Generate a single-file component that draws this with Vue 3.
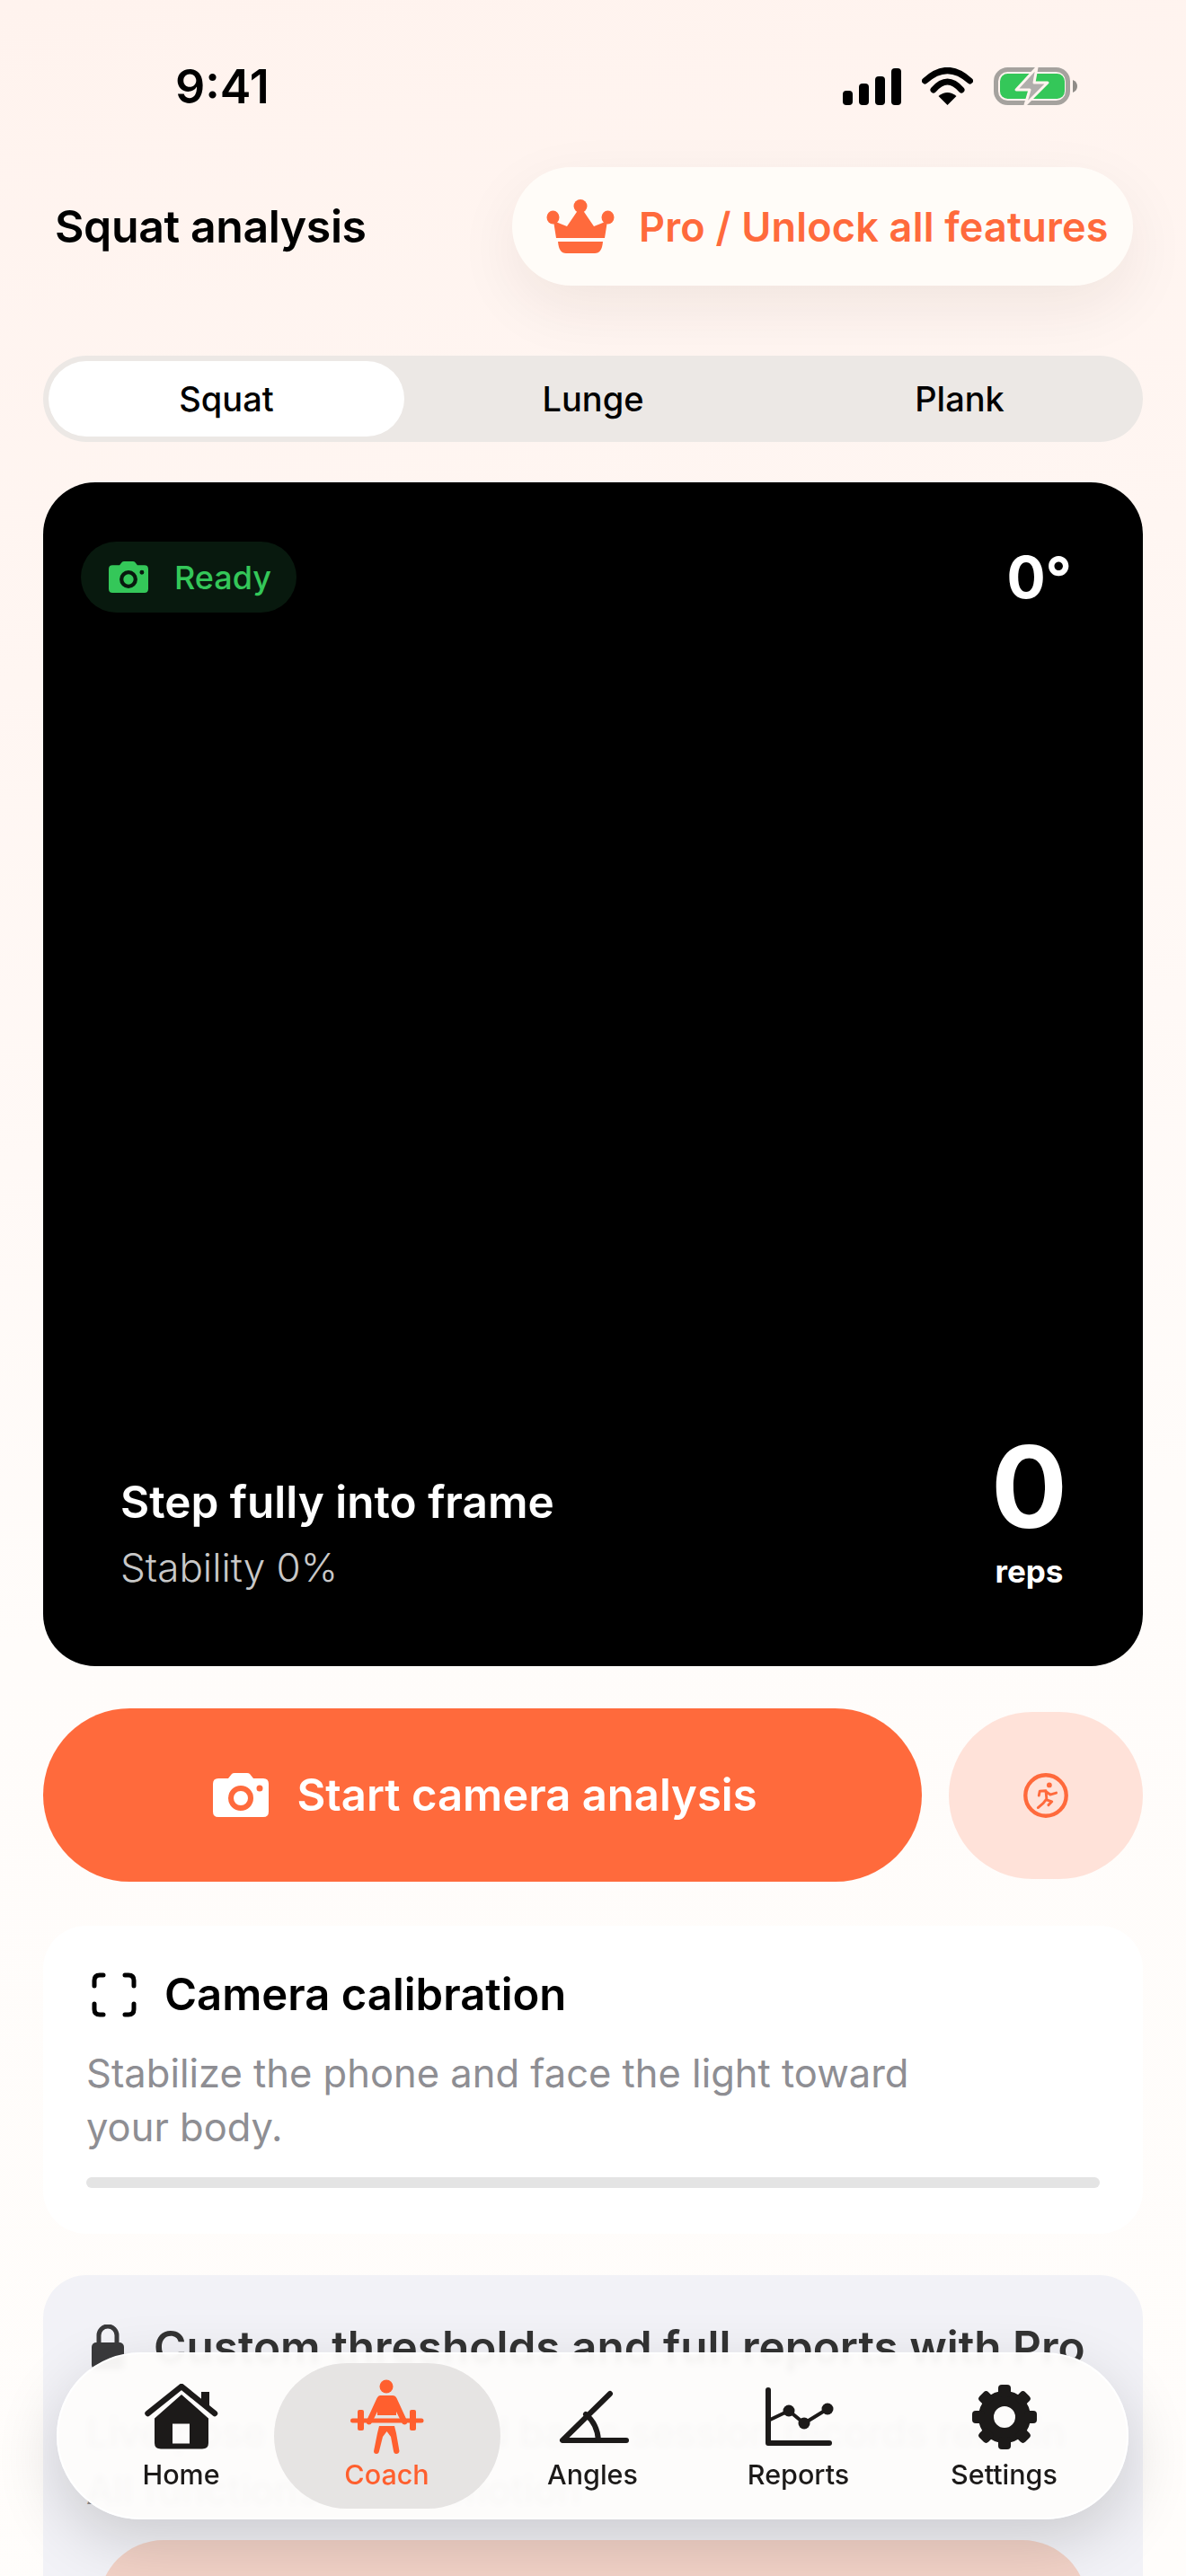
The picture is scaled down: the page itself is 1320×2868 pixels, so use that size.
<script setup>
const tabs = ['Squat', 'Lunge', 'Plank']
const bars = [16, 24, 32, 41]
const gearTeeth = [0, 45, 90, 135, 180, 225, 270, 315]
</script>

<template>
  <div class="page">
    <div class="status">
      <span class="time">9:41</span>
      <div class="status-icons">
        <div class="signal">
          <i v-for="h in bars" :key="h" :style="{ height: h + 'px' }"></i>
        </div>
        <svg width="57" height="42" viewBox="0 0 57 42">
          <path d="M3.5 15Q28.5 -8 53.5 15" fill="none" stroke="#000" stroke-width="7" stroke-linecap="round" />
          <path d="M13 25Q28.5 7 44 25" fill="none" stroke="#000" stroke-width="7" stroke-linecap="round" />
          <path d="M28.5 42L18.5 32Q28.5 24 38.5 32Z" fill="#000" />
        </svg>
        <svg width="94" height="46" viewBox="0 0 94 46">
          <rect x="2.5" y="4.5" width="80" height="37" rx="13" fill="none" stroke="#a5a29e" stroke-width="5" />
          <rect x="7" y="9" width="72" height="28" rx="8.5" fill="#34c759" />
          <path d="M88 16Q93 18 93 23Q93 28 88 30Z" fill="#8f8c88" />
          <path d="M48 2L25 27H40L35 44L60 19H45Z" fill="#b0aeac" stroke="#fff4ef" stroke-width="3" stroke-linejoin="round" />
        </svg>
      </div>
    </div>

    <header class="top">
      <h1>Squat analysis</h1>
      <button class="pro-btn">
        <svg width="76" height="60" viewBox="0 0 76 60">
          <ellipse cx="38" cy="7.5" rx="7.5" ry="7.5" />
          <ellipse cx="7.5" cy="20" rx="7" ry="7.5" />
          <ellipse cx="68.5" cy="20" rx="7" ry="7.5" />
          <path d="M11 43L8 24L23 30L38 8L53 30L68 24L65 43Z" />
          <path d="M13 47H63Q62 60 54 60H22Q14 60 13 47Z" />
        </svg>
        <span>Pro / Unlock all features</span>
      </button>
    </header>

    <div class="tabs">
      <div v-for="(t, i) in tabs" :key="t" class="tab" :class="{ active: i === 0 }">{{ t }}</div>
    </div>

    <section class="camera">
      <div class="cam-top">
        <div class="ready">
          <svg width="44" height="35" viewBox="0 0 62 49">
            <path fill="#34c759" fill-rule="evenodd" d="M6 6H17L21 1Q22 0 24 0H38Q40 0 41 1L45 6H56Q62 6 62 12V43Q62 49 56 49H6Q0 49 0 43V12Q0 6 6 6ZM31 14A14 14 0 1 0 31 42A14 14 0 1 0 31 14ZM31 20A8 8 0 1 1 31 36A8 8 0 1 1 31 20ZM52 13.5A3.5 3.5 0 1 0 52 20.500A3.5 3.5 0 1 0 52 13.5Z" />
          </svg>
          <span>Ready</span>
        </div>
        <div class="angle">0°</div>
      </div>
      <div class="cam-bottom">
        <div>
          <div class="hint">Step fully into frame</div>
          <div class="stability">Stability 0%</div>
        </div>
        <div class="reps">
          <div class="reps-num">0</div>
          <div class="reps-label">reps</div>
        </div>
      </div>
    </section>

    <div class="actions">
      <button class="start">
        <svg width="62" height="49" viewBox="0 0 62 49">
          <path fill="#fff" fill-rule="evenodd" d="M6 6H17L21 1Q22 0 24 0H38Q40 0 41 1L45 6H56Q62 6 62 12V43Q62 49 56 49H6Q0 49 0 43V12Q0 6 6 6ZM31 14A14 14 0 1 0 31 42A14 14 0 1 0 31 14ZM31 20A8 8 0 1 1 31 36A8 8 0 1 1 31 20ZM52 13.5A3.5 3.5 0 1 0 52 20.500A3.5 3.5 0 1 0 52 13.5Z" />
        </svg>
        <span>Start camera analysis</span>
      </button>
      <button class="run">
        <svg width="58" height="58" viewBox="0 0 60 60">
          <circle cx="30" cy="30" r="23.500" fill="none" stroke="#ff6a3c" stroke-width="4.500" />
          <circle cx="34" cy="18" r="3" fill="#ff6a3c" />
          <path d="M22 30L23 25L30 24.500L31 35L37 37L33 41M30 35L27 39L21 44M31 26L35 29L42 27" fill="none" stroke="#ff6a3c" stroke-width="3" stroke-linecap="round" stroke-linejoin="round" />
        </svg>
      </button>
    </div>

    <section class="calib">
      <div class="calib-head">
        <svg width="50" height="50" viewBox="0 0 50 50" fill="none" stroke="#000" stroke-width="5" stroke-linecap="round">
          <path d="M3 15V9Q3 3 9 3H13M37 3H41Q47 3 47 9V15M47 35V41Q47 47 41 47H37M13 47H9Q3 47 3 41V35" />
        </svg>
        <h2>Camera calibration</h2>
      </div>
      <p>Stabilize the phone and face the light toward your body.</p>
      <div class="track"></div>
    </section>

    <section class="pro-card">
      <div class="pro-head">
        <svg width="36" height="50" viewBox="0 0 36 50">
          <path d="M8 22V12A10 10 0 0 1 28 12V22" fill="none" stroke="#3a3a3c" stroke-width="5" />
          <rect y="20" width="36" height="30" rx="5" fill="#3a3a3c" />
        </svg>
        <h2>Custom thresholds and full reports with Pro</h2>
      </div>
      <p>Live pose analysis and basic session records remain<br />All functions at 100 motion</p>
      <div class="pro-cta"></div>
    </section>

    <nav class="nav">
      <div class="nav-item">
        <svg width="82" height="74" viewBox="0 0 82 74">
          <path d="M11 38.500L41 12L71 38.500V66Q71 72.500 64 72.500H18Q11 72.500 11 66ZM31 44.500V66.500H50V44.500Z" fill="#1c1a19" fill-rule="evenodd" />
          <path d="M3.500 33L41 3L78 33" fill="none" stroke="#1c1a19" stroke-width="6.500" stroke-linecap="round" stroke-linejoin="round" />
          <path d="M63 9H72V25L63 18Z" fill="#1c1a19" />
        </svg>
        <span>Home</span>
      </div>
      <div class="nav-item on">
        <svg width="82" height="84" viewBox="0 0 82 84">
          <circle cx="40" cy="8" r="7.500" fill="#ff5f2e" />
          <path d="M33 18H47Q50 18 51.500 21L63 46Q64 50 60.500 50.500Q58 50.500 57 48L51 36V40H30V36L24 48Q23 50.500 20.500 50.500Q17 50 18 46L29.500 21Q31 18 33 18Z" fill="#ff5f2e" />
          <path d="M2.500 46H79" stroke="#ff5f2e" stroke-width="5" stroke-linecap="round" />
          <rect x="8" y="34" width="7" height="23" rx="2" fill="#ff5f2e" />
          <rect x="66" y="34" width="7" height="23" rx="2" fill="#ff5f2e" />
          <path d="M32 52H49L51 60L54.500 80Q54 83 51 83Q48.500 83 48 80L45 64L40.500 58L36 64L32 80Q31.500 83 29 83Q26 83 26 80L30 60Z" fill="#ff5f2e" />
        </svg>
        <span>Coach</span>
      </div>
      <div class="nav-item">
        <svg width="82" height="60" viewBox="0 0 82 60" fill="none" stroke="#1c1a19" stroke-width="6" stroke-linecap="round" stroke-linejoin="round">
          <path d="M60 4L7 56H78" />
          <path d="M33 27Q46 38 47 56" />
        </svg>
        <span>Angles</span>
      </div>
      <div class="nav-item">
        <svg width="80" height="66" viewBox="0 0 80 66">
          <path d="M6 3V62H74" fill="none" stroke="#1c1a19" stroke-width="6" stroke-linecap="round" stroke-linejoin="round" />
          <path d="M6 37L29 26L46 40L72 24" fill="none" stroke="#1c1a19" stroke-width="4" />
          <circle cx="29" cy="26" r="6.500" fill="#1c1a19" />
          <circle cx="46" cy="40" r="6.500" fill="#1c1a19" />
          <circle cx="72" cy="24" r="6.500" fill="#1c1a19" />
        </svg>
        <span>Reports</span>
      </div>
      <div class="nav-item">
        <svg width="74" height="74" viewBox="-37 -37 74 74">
          <circle r="20.500" fill="none" stroke="#1c1a19" stroke-width="17" />
          <rect v-for="a in gearTeeth" :key="a" x="-7" y="-36" width="14" height="14" rx="4" fill="#1c1a19" :transform="`rotate(${a})`" />
        </svg>
        <span>Settings</span>
      </div>
      <div class="nav-pill"></div>
    </nav>
  </div>
</template>

<style>
html, body {
  margin: 0;
  background: #fffcfa;
}
</style>

<style scoped>
.page {
  position: relative;
  width: 1320px;
  height: 2868px;
  overflow: hidden;
  padding: 0 48px;
  box-sizing: border-box;
  background: linear-gradient(172deg, #fff3ee 0%, #fff6f2 25%, #fffcfa 60%, #fffdfb 100%);
  font-family: Inter, "Noto Sans", sans-serif;
  color: #000;
}

h1, h2, p {
  margin: 0;
}

button {
  border: 0;
  padding: 0;
  font-family: inherit;
}

.status {
  height: 186px;
  margin: 0 -48px;
  padding: 0 120px 0 195px;
  box-sizing: border-box;
  display: flex;
  justify-content: space-between;
  align-items: flex-start;
}

.time {
  margin-top: 66px;
  font-size: 52px;
  line-height: 62px;
  font-weight: 600;
}

.status-icons {
  margin-top: 73px;
  height: 46px;
  display: flex;
  align-items: center;
  gap: 23px;
}

.signal {
  display: flex;
  align-items: flex-end;
  gap: 7px;
  height: 42px;
}

.signal i {
  display: block;
  width: 11px;
  border-radius: 4px;
  background: #000;
}

.top {
  height: 132px;
  padding-left: 13px;
  display: flex;
  justify-content: space-between;
  align-items: center;
}

.top h1 {
  font-size: 50px;
  font-weight: 600;
  letter-spacing: -0.4px;
}

.pro-btn {
  margin-right: 11px;
  width: 691px;
  height: 132px;
  padding-left: 38px;
  box-sizing: border-box;
  display: flex;
  align-items: center;
  gap: 27px;
  border-radius: 66px;
  background: #fffcf8;
  box-shadow: 0 24px 70px rgba(60, 30, 20, 0.07);
  color: #ff6a3c;
  font-size: 45px;
  font-weight: 600;
  letter-spacing: 0.2px;
}

.pro-btn svg {
  fill: #ff6a3c;
}

.tabs {
  margin-top: 78px;
  height: 96px;
  padding: 6px;
  box-sizing: border-box;
  display: grid;
  grid-template-columns: repeat(3, 396px);
  gap: 12px;
  border-radius: 48px;
  background: #ece8e5;
}

.tab {
  display: flex;
  justify-content: center;
  align-items: center;
  border-radius: 42px;
  font-size: 38px;
  font-weight: 500;
}

.tab.active {
  background: #fff;
}

.camera {
  margin-top: 45px;
  height: 1318px;
  border-radius: 58px;
  background: #000;
  color: #fff;
  display: flex;
  flex-direction: column;
  justify-content: space-between;
}

.cam-top {
  padding: 66px 79px 0 42px;
  display: flex;
  justify-content: space-between;
  align-items: flex-start;
}

.ready {
  width: 240px;
  height: 79px;
  padding-left: 31px;
  box-sizing: border-box;
  display: flex;
  align-items: center;
  gap: 29px;
  border-radius: 40px;
  background: #08190e;
  color: #34c759;
  font-size: 36px;
  font-weight: 500;
}

.angle {
  margin-top: 8px;
  font-size: 64px;
  font-weight: 700;
  line-height: 64px;
}

.cam-bottom {
  padding: 0 84px 84px 86px;
  display: flex;
  justify-content: space-between;
  align-items: flex-end;
}

.hint {
  font-size: 49.500px;
  font-weight: 600;
  line-height: 60px;
}

.stability {
  margin-top: 17px;
  font-size: 44px;
  line-height: 52px;
  font-weight: 300;
  color: #c8c8c8;
}

.reps {
  text-align: center;
}

.reps-num {
  font-size: 126px;
  line-height: 132px;
  font-weight: 700;
}

.reps-label {
  margin-top: 6px;
  font-size: 35px;
  line-height: 44px;
  font-weight: 700;
}

.actions {
  margin-top: 47px;
  height: 193px;
  display: flex;
  align-items: center;
  gap: 30px;
}

.start {
  width: 978px;
  height: 193px;
  padding-left: 6px;
  box-sizing: border-box;
  display: flex;
  justify-content: center;
  align-items: center;
  gap: 31px;
  border-radius: 97px;
  background: #ff6a3c;
  color: #fff;
  font-size: 49px;
  font-weight: 600;
}

.run {
  width: 216px;
  height: 186px;
  display: flex;
  justify-content: center;
  align-items: center;
  border-radius: 93px;
  background: #ffe2d9;
}

.calib {
  margin-top: 49px;
  height: 343px;
  padding: 47px 48px 0;
  box-sizing: border-box;
  border-radius: 48px;
  background: #fff;
}

.calib-head {
  display: flex;
  align-items: center;
  gap: 31px;
  padding-left: 6px;
}

.calib-head h2 {
  font-size: 49px;
  font-weight: 600;
}

.calib p {
  margin-top: 28px;
  width: 960px;
  font-size: 43.500px;
  line-height: 60px;
  color: #8e8e93;
}

.track {
  margin-top: 26px;
  height: 12px;
  border-radius: 6px;
  background: #e4e4e4;
}

.pro-card {
  margin-top: 46px;
  height: 500px;
  padding: 50px 48px 0;
  box-sizing: border-box;
  border-radius: 48px;
  background: #f2f2f7;
}

.pro-head {
  display: flex;
  align-items: center;
  gap: 33px;
  padding-left: 6px;
  color: #333;
}

.pro-head h2 {
  font-size: 49.500px;
  font-weight: 600;
  white-space: nowrap;
}

.pro-card p {
  margin-top: 33px;
  font-size: 44px;
  line-height: 64px;
  color: #8e8e93;
  white-space: nowrap;
}

.pro-cta {
  margin: 24px 14px 0;
  height: 193px;
  border-radius: 72px;
  background: #f2d2c7;
}

.nav {
  position: absolute;
  left: 63px;
  top: 2619px;
  width: 1193px;
  height: 186px;
  display: flex;
  justify-content: space-between;
  padding: 0 22px;
  box-sizing: border-box;
  border-radius: 93px;
  border: 2px solid #fff;
  background: rgba(253, 252, 251, 0.955);
  backdrop-filter: blur(3px);
  box-shadow: 0 24px 70px rgba(0, 0, 0, 0.16);
}

.nav-item {
  position: relative;
  z-index: 1;
  width: 232px;
  height: 128px;
  margin-top: 24px;
  display: flex;
  flex-direction: column;
  align-items: center;
  justify-content: flex-end;
  color: #1c1a19;
  font-size: 30.500px;
  font-weight: 500;
  line-height: 36px;
}

.nav-item svg {
  position: absolute;
  top: 46px;
  left: 50%;
  transform: translate(-50%, -50%);
}

.nav-item.on {
  color: #ff5f2e;
}

.nav-pill {
  position: absolute;
  left: 240px;
  top: 10px;
  width: 252px;
  height: 162px;
  border-radius: 81px;
  background: #e6e4e3;
}
</style>
